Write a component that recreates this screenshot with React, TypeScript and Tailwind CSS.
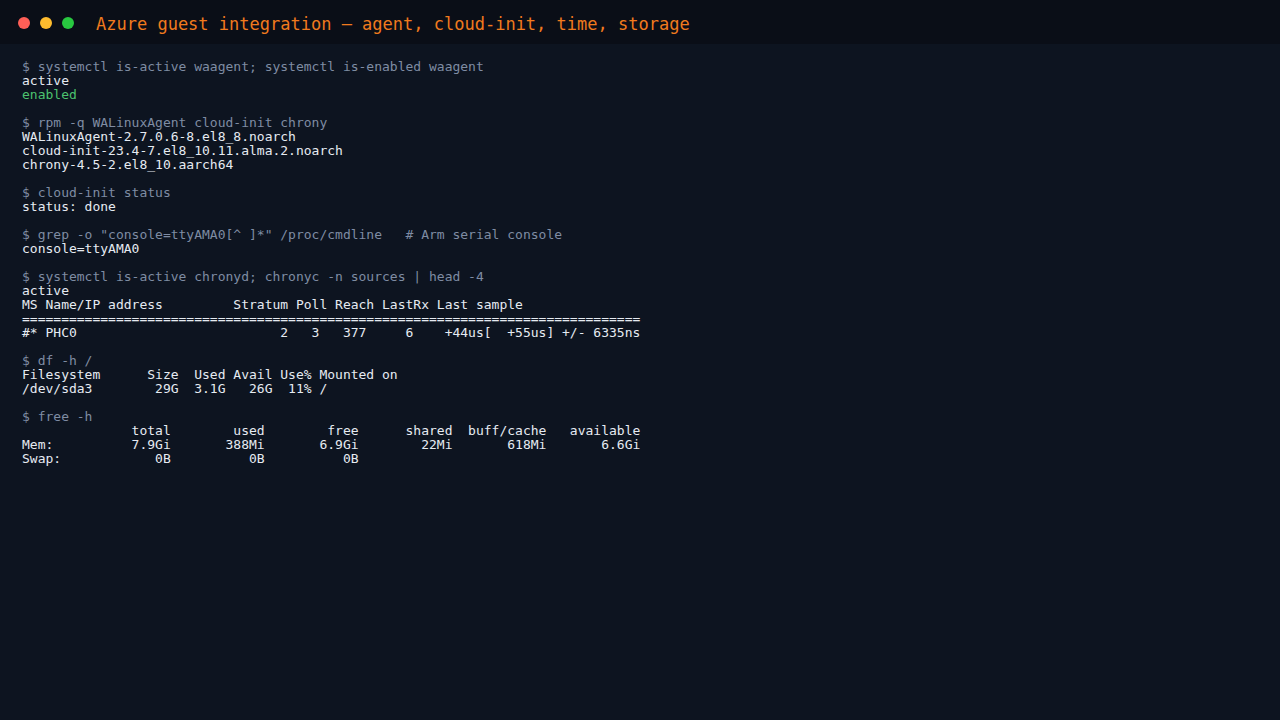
import React from "react";

type Line = { t: string; k: "cmd" | "out" | "ok" | "blank" };

const lines: Line[] = [
  { t: "$ systemctl is-active waagent; systemctl is-enabled waagent", k: "cmd" },
  { t: "active", k: "out" },
  { t: "enabled", k: "ok" },
  { t: "", k: "blank" },
  { t: "$ rpm -q WALinuxAgent cloud-init chrony", k: "cmd" },
  { t: "WALinuxAgent-2.7.0.6-8.el8_8.noarch", k: "out" },
  { t: "cloud-init-23.4-7.el8_10.11.alma.2.noarch", k: "out" },
  { t: "chrony-4.5-2.el8_10.aarch64", k: "out" },
  { t: "", k: "blank" },
  { t: "$ cloud-init status", k: "cmd" },
  { t: "status: done", k: "out" },
  { t: "", k: "blank" },
  { t: "$ grep -o \"console=ttyAMA0[^ ]*\" /proc/cmdline   # Arm serial console", k: "cmd" },
  { t: "console=ttyAMA0", k: "out" },
  { t: "", k: "blank" },
  { t: "$ systemctl is-active chronyd; chronyc -n sources | head -4", k: "cmd" },
  { t: "active", k: "out" },
  { t: "MS Name/IP address         Stratum Poll Reach LastRx Last sample", k: "out" },
  { t: "===============================================================================", k: "out" },
  { t: "#* PHC0                          2   3   377     6    +44us[  +55us] +/- 6335ns", k: "out" },
  { t: "", k: "blank" },
  { t: "$ df -h /", k: "cmd" },
  { t: "Filesystem      Size  Used Avail Use% Mounted on", k: "out" },
  { t: "/dev/sda3        29G  3.1G   26G  11% /", k: "out" },
  { t: "", k: "blank" },
  { t: "$ free -h", k: "cmd" },
  { t: "              total        used        free      shared  buff/cache   available", k: "out" },
  { t: "Mem:          7.9Gi       388Mi       6.9Gi        22Mi       618Mi       6.6Gi", k: "out" },
  { t: "Swap:            0B          0B          0B", k: "out" },
];

const colorFor: Record<Line["k"], string> = {
  cmd: "text-[#7f8ca3]",
  out: "text-[#e6ebf2]",
  ok: "text-[#4cc26f]",
  blank: "",
};

export default function App() {
  return (
    <div
      className="w-[1280px] h-[720px] bg-[#0d1420] flex flex-col overflow-hidden"
      style={{ fontFamily: '"DejaVu Sans Mono", "Liberation Mono", monospace' }}
    >
      <div className="h-[44px] shrink-0 bg-[#0a0e17] flex items-center pl-[18px]">
        <div className="flex gap-[10px] pt-px">
          <span className="w-[12px] h-[12px] rounded-full bg-[#ff5f57]" />
          <span className="w-[12px] h-[12px] rounded-full bg-[#febc2e]" />
          <span className="w-[12px] h-[12px] rounded-full bg-[#28c840]" />
        </div>
        <div className="ml-[22px] text-[17px] leading-[20px] pt-[3px] text-[#f07a1e] whitespace-pre">
          Azure guest integration — agent, cloud-init, time, storage
        </div>
      </div>
      <div className="pt-[16px] px-[22px] text-[13px] leading-[14px]">
        {lines.map((l, i) => (
          <div key={i} className={`whitespace-pre h-[14px] ${colorFor[l.k]}`}>
            {l.t}
          </div>
        ))}
      </div>
    </div>
  );
}
